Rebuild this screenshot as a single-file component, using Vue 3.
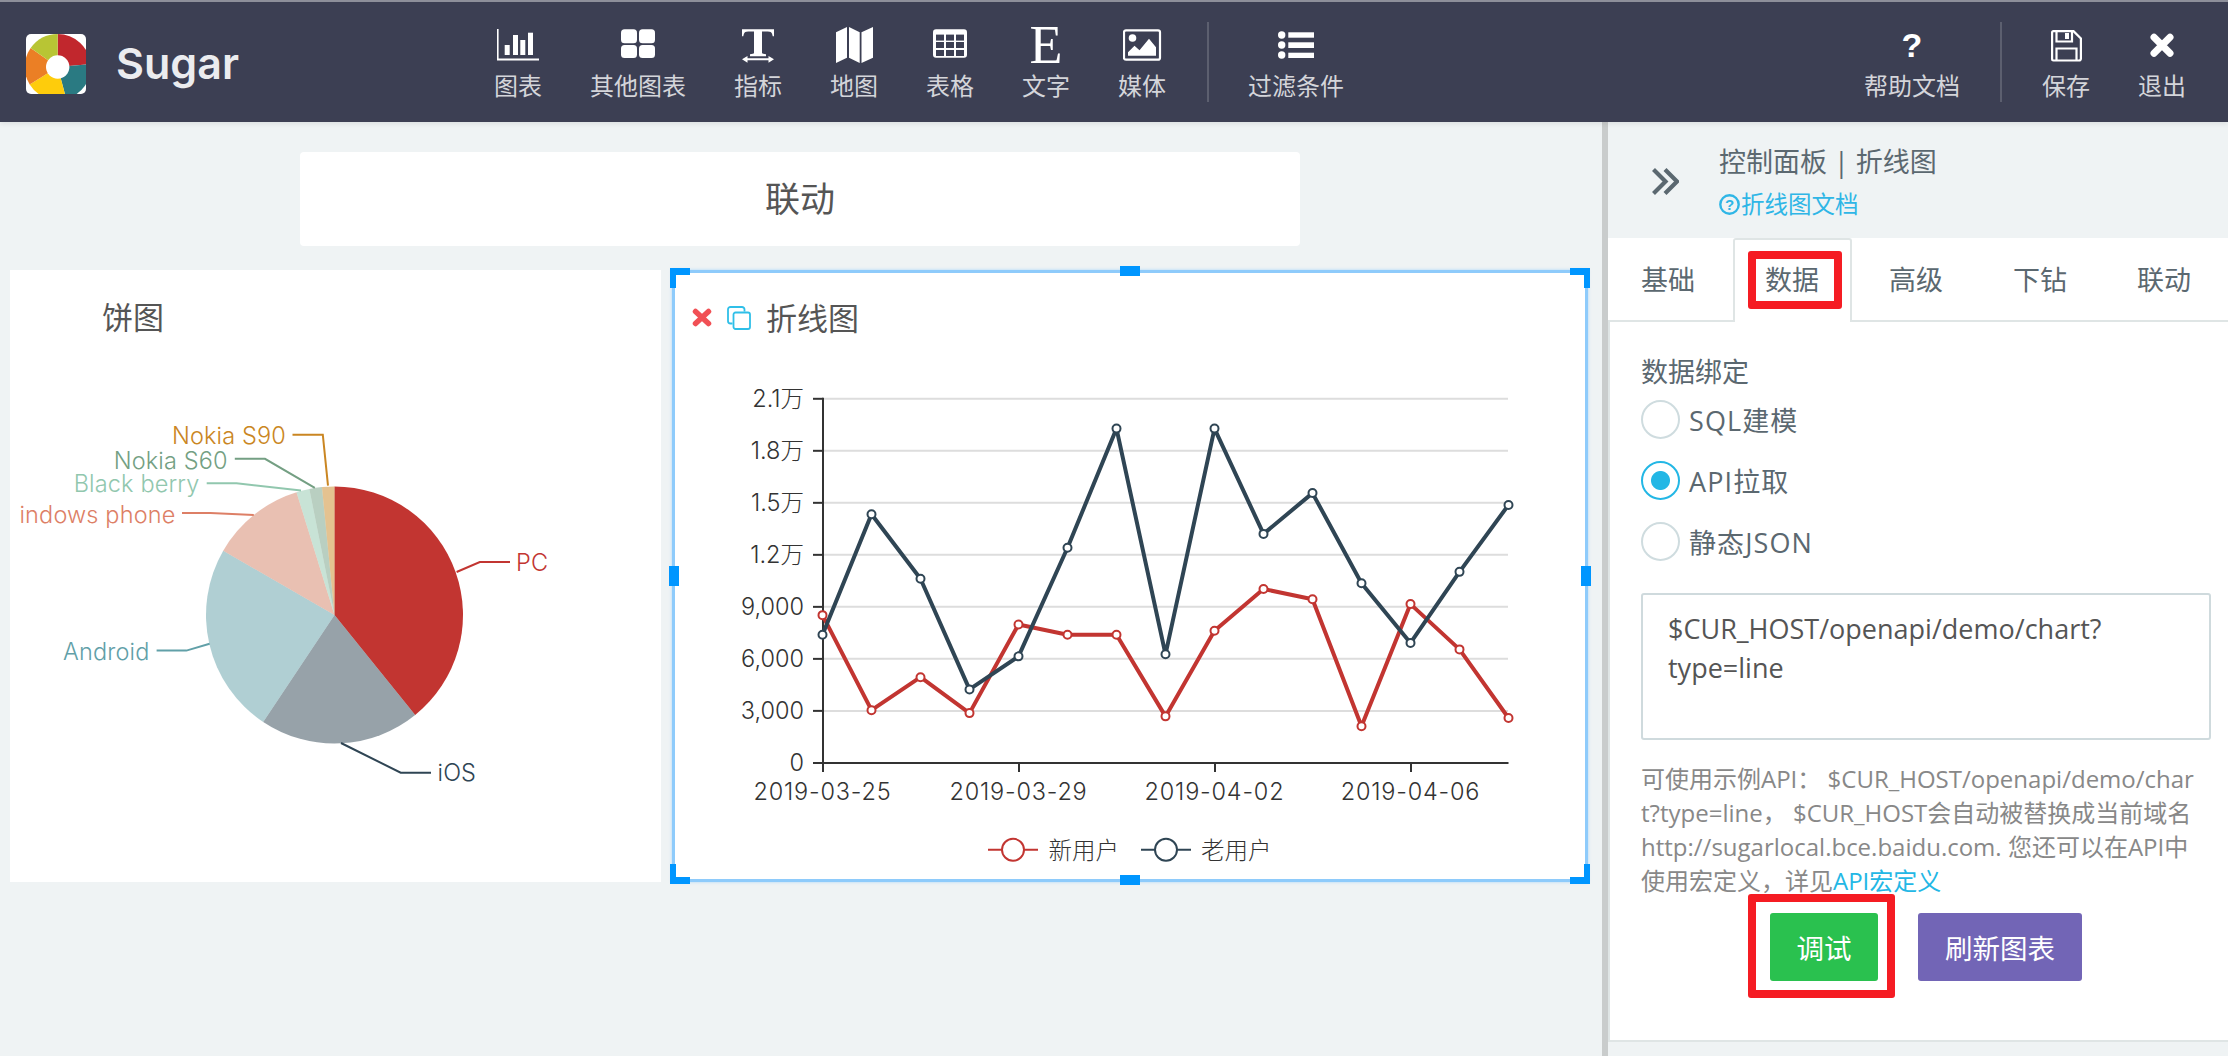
<script setup>
import { computed } from 'vue'

const toolsLeft = [
  { key: 'chart', label: '图表' },
  { key: 'grid', label: '其他图表' },
  { key: 'metric', label: '指标' },
  { key: 'map', label: '地图' },
  { key: 'table', label: '表格' },
  { key: 'text', label: '文字' },
  { key: 'media', label: '媒体' },
]
const tabs = ['基础', '数据', '高级', '下钻', '联动']

// angles are degrees clockwise from 12 o'clock
function sector(cx, cy, r, a0, a1) {
  const p = (a) => {
    const t = (a * Math.PI) / 180
    return `${(cx + r * Math.sin(t)).toFixed(2)} ${(cy - r * Math.cos(t)).toFixed(2)}`
  }
  return `M${cx} ${cy}L${p(a0)}A${r} ${r} 0 ${a1 - a0 > 180 ? 1 : 0} 1 ${p(a1)}Z`
}

const logoParts = [
  [0, 85, '#c1272d'],
  [85, 165, '#2a7a82'],
  [165, 238, '#fecc0c'],
  [238, 305, '#eb7f25'],
  [305, 360, '#b8c534'],
].map(([a, b, fill]) => ({ d: sector(31.7, 33, 33, a, b), fill }))

const pieParts = [
  [0, 141.1, '#c23531', 1],
  [141.1, 213.7, '#2f4554', 0.5],
  [213.7, 300, '#61a0a8', 0.5],
  [300, 342.8, '#d48265', 0.5],
  [342.8, 348.7, '#91c7ae', 0.5],
  [348.7, 354.4, '#749f83', 0.5],
  [354.4, 360, '#ca8622', 0.5],
].map(([a, b, fill, opacity]) => ({ d: sector(334.5, 615, 128.5, a, b), fill, opacity }))

const pieLabels = [
  { name: 'PC', color: '#c23531', pts: '456.6,572 479.8,562 510,562', x: 516, y: 562, anchor: 'start' },
  { name: 'iOS', color: '#2f4554', pts: '341,743 400.7,772.7 431,772.7', x: 437.5, y: 772.7, anchor: 'start' },
  { name: 'Android', color: '#61a0a8', pts: '209.6,643.7 186.4,650.6 156.6,650.6', x: 149.5, y: 651.5, anchor: 'end' },
  { name: 'Windows phone', color: '#dd7f66', pts: '253.8,515 210.4,513 182,513', x: 175.5, y: 514, anchor: 'end' },
  { name: 'Black berry', color: '#91c7ae', pts: '301,490.6 236.5,483.3 206.7,483.3', x: 199.5, y: 483.7, anchor: 'end' },
  { name: 'Nokia S60', color: '#749f83', pts: '314.8,487.8 265,458.8 234.8,458.8', x: 227.7, y: 460, anchor: 'end' },
  { name: 'Nokia S90', color: '#ca8622', pts: '328,485.7 322.8,434.7 292.5,434.7', x: 286, y: 435.5, anchor: 'end' },
]

const newUsers = [8523, 3037, 4944, 2872, 7981, 7392, 7392, 2684, 7627, 10029, 9440, 2119, 9158, 6546, 2590]
const oldUsers = [7392, 14337, 10618, 4238, 6145, 12407, 19281, 6264, 19281, 13208, 15562, 10360, 6922, 11018, 14879]

const xAt = (i) => 822.5 + i * 49
const yAt = (v) => 762.9 - (v * 364.1) / 21000

const toSeries = (values, color) => {
  const points = values.map((v, i) => ({ x: xAt(i), y: yAt(v) }))
  return { color, points, line: points.map((p) => `${p.x},${p.y.toFixed(1)}`).join(' ') }
}
const series = computed(() => [toSeries(newUsers, '#c23531'), toSeries(oldUsers, '#2f4554')])

const yTicks = [
  [0, '0'], [3000, '3,000'], [6000, '6,000'], [9000, '9,000'],
  [12000, '1.2万'], [15000, '1.5万'], [18000, '1.8万'], [21000, '2.1万'],
].map(([v, label]) => ({ v, label, y: yAt(v) }))

const xTicks = [
  [823, '2019-03-25'], [1019, '2019-03-29'], [1215, '2019-04-02'], [1411, '2019-04-06'],
].map(([x, label]) => ({ x, label }))
</script>

<template>
  <div class="app">
    <header class="topbar">
      <div class="brand">
        <div class="logo">
          <svg width="60" height="60" viewBox="0 0 60 60">
            <path v-for="p in logoParts" :key="p.fill" :d="p.d" :fill="p.fill" />
            <circle cx="31.7" cy="33" r="11.7" fill="#fff" />
          </svg>
        </div>
        <span class="brand-name">Sugar</span>
      </div>

      <nav class="tools">
        <div v-for="t in toolsLeft" :key="t.key" class="tool">
          <div class="tool-icon">
            <svg v-if="t.key === 'chart'" width="42" height="36" viewBox="0 0 42 36" fill="#fff">
              <path d="M0 2h1.6v29.5H42v2H0z" />
              <rect x="7.7" y="18" width="5" height="10" />
              <rect x="16" y="8" width="5" height="20" />
              <rect x="23.3" y="13" width="5" height="15" />
              <rect x="31" y="5.700" width="5" height="22.300" />
            </svg>
            <svg v-else-if="t.key === 'grid'" width="34" height="36" viewBox="0 0 34 36" fill="#fff">
              <rect x="0" y="2.300" width="16" height="14" rx="3.500" />
              <rect x="18" y="2.300" width="16" height="14" rx="3.500" />
              <rect x="0" y="18" width="16" height="13" rx="3.500" />
              <rect x="18" y="18" width="16" height="13" rx="3.500" />
            </svg>
            <svg v-else-if="t.key === 'metric'" width="32" height="36" viewBox="0 0 32 36" fill="#fff">
              <path d="M0 2.300h32v7h-1.300c-.3-2-.8-3.600-2-4.300-1-.5-4-.6-8.700-.6v21.500c0 .8 2 1 4 1.400v1.900H8v-1.900c2-.4 4-.6 4-1.400V4.400c-4.700 0-7.700.1-8.700.6-1.200.7-1.700 2.300-2 4.300H0z" />
              <path d="M5.500 29 0 32.300l5.500 3.400v-2.400h21v2.400l5.500-3.400-5.500-3.300v2.300h-21z" />
            </svg>
            <svg v-else-if="t.key === 'map'" width="37" height="36" viewBox="0 0 37 36" fill="#fff">
              <path d="M0 5.300 11 0v30.700L0 36zM13 0l10.700 5.300V36L13 30.700zM25.500 5.300 37 0v30.700L25.500 36z" />
            </svg>
            <svg v-else-if="t.key === 'table'" width="34" height="36" viewBox="0 0 34 36">
              <rect x="0" y="2.300" width="34" height="28.400" rx="3" fill="#fff" />
              <g fill="#3c3f53">
                <template v-for="cy in [7.600, 15, 23]" :key="cy">
                  <rect x="3" :y="cy" width="8" height="6" />
                  <rect x="13" :y="cy" width="8" height="6" />
                  <rect x="23" :y="cy" width="8" height="6" />
                </template>
              </g>
            </svg>
            <span v-else-if="t.key === 'text'" class="glyph-e">E</span>
            <svg v-else width="39" height="36" viewBox="0 0 39 36">
              <rect x="1" y="3.300" width="36" height="29.400" rx="2" fill="none" stroke="#fff" stroke-width="2.200" />
              <circle cx="9.500" cy="11" r="3.800" fill="#fff" />
              <path d="M5 28.700v-3.500l6.500-6.500 5 4.500 9.500-11.500 7 8.500v8.500z" fill="#fff" />
            </svg>
          </div>
          <span class="tool-label">{{ t.label }}</span>
        </div>
        <i class="vline first-line"></i>
        <div class="tool">
          <div class="tool-icon">
            <svg width="36" height="36" viewBox="0 0 36 36" fill="#fff">
              <circle cx="3.700" cy="8" r="3.700" />
              <circle cx="3.700" cy="18" r="3.700" />
              <circle cx="3.700" cy="28" r="3.700" />
              <rect x="10.300" y="5.300" width="25.700" height="5.400" />
              <rect x="10.300" y="15.300" width="25.700" height="5.700" />
              <rect x="10.300" y="25.700" width="25.700" height="5.300" />
            </svg>
          </div>
          <span class="tool-label">过滤条件</span>
        </div>
      </nav>

      <div class="tools tools-right">
        <div class="tool">
          <div class="tool-icon"><span class="glyph-q">?</span></div>
          <span class="tool-label">帮助文档</span>
        </div>
        <i class="vline"></i>
        <div class="tool">
          <div class="tool-icon">
            <svg width="31" height="36" viewBox="0 0 31 36" fill="none" stroke="#fff" stroke-width="2.200">
              <path d="M2.500 4.100h20l7.400 7.400v20a2 2 0 0 1-2 2h-25.400a1.400 1.400 0 0 1-1.400-1.400v-26.600a1.400 1.400 0 0 1 1.400-1.400z" />
              <path d="M5.500 4.500v10h15.500v-10M5.500 33v-11.500h20v11.500" />
              <rect x="14" y="6" width="4" height="6" fill="#fff" stroke="none" />
            </svg>
          </div>
          <span class="tool-label">保存</span>
        </div>
        <div class="tool">
          <div class="tool-icon">
            <svg width="24" height="36" viewBox="0 0 24 36" stroke="#fff" stroke-width="7" stroke-linecap="round">
              <path d="M4 10.300l16 16M20 10.300l-16 16" />
            </svg>
          </div>
          <span class="tool-label">退出</span>
        </div>
      </div>
    </header>

    <main class="workspace">
      <section class="canvas">
        <div class="title-card">联动</div>
        <div class="card-row">
          <div class="pie-card">
            <div class="card-head pie-head">饼图</div>
            <svg class="chart" width="651" height="538" viewBox="10 344 651 538">
              <defs>
                <clipPath id="pie-clip"><rect x="20" y="344" width="641" height="538" /></clipPath>
              </defs>
              <path v-for="p in pieParts" :key="p.fill" :d="p.d" :fill="p.fill" :opacity="p.opacity" />
              <g clip-path="url(#pie-clip)">
                <g v-for="l in pieLabels" :key="l.name">
                  <polyline :points="l.pts" fill="none" :stroke="l.color" stroke-width="2" />
                  <text :x="l.x" :y="l.y" :fill="l.color" :text-anchor="l.anchor" dominant-baseline="central" class="pie-text">{{ l.name }}</text>
                </g>
              </g>
            </svg>
          </div>

          <div class="line-card">
            <i class="handle corner tl"></i>
            <i class="handle corner tr"></i>
            <i class="handle corner bl"></i>
            <i class="handle corner br"></i>
            <i class="handle mid top"></i>
            <i class="handle mid bottom"></i>
            <i class="handle side left"></i>
            <i class="handle side right"></i>
            <div class="card-head line-head">
              <svg class="del-icon" width="20" height="19" viewBox="0 0 20 19" stroke="#f15055" stroke-width="5.500" stroke-linecap="round">
                <path d="M3.500 3.500l13 12M16.500 3.500l-13 12" />
              </svg>
              <svg class="copy-icon" width="24" height="24" viewBox="0 0 24 24" fill="none" stroke="#2fbfe8" stroke-width="1.800">
                <path d="M5.500 17.500h-2a2.500 2.500 0 0 1-2.500-2.500v-11.500a2.500 2.500 0 0 1 2.500-2.500h11.500a2.500 2.500 0 0 1 2.500 2.500v2" />
                <rect x="6.500" y="6.500" width="16.500" height="16.500" rx="2" />
              </svg>
              <span>折线图</span>
            </div>
            <svg class="chart" width="911" height="537" viewBox="675 344 911 537">
              <line v-for="t in yTicks.slice(1)" :key="t.v" x1="823" x2="1508" :y1="t.y" :y2="t.y" stroke="#ddd" stroke-width="2" />
              <g stroke="#333" stroke-width="2">
                <line x1="823" x2="823" y1="397.800" y2="763.900" />
                <line x1="813" x2="1508.500" y1="762.900" y2="762.900" />
                <line v-for="t in yTicks.slice(1)" :key="t.v" x1="813" x2="823" :y1="t.y" :y2="t.y" />
                <line v-for="t in xTicks" :key="t.x" :x1="t.x" :x2="t.x" y1="763" y2="772" />
              </g>
              <text v-for="t in yTicks" :key="t.v" x="804" :y="t.y" text-anchor="end" dominant-baseline="central" class="axis-text">{{ t.label }}</text>
              <text v-for="t in xTicks" :key="t.x" :x="t.x - 0.5" y="791" text-anchor="middle" dominant-baseline="central" class="axis-text x-text">{{ t.label }}</text>
              <g v-for="s in series" :key="s.color">
                <polyline :points="s.line" fill="none" :stroke="s.color" stroke-width="4" stroke-linejoin="round" />
                <circle v-for="(p, i) in s.points" :key="i" :cx="p.x" :cy="p.y" r="4" fill="#fff" :stroke="s.color" stroke-width="2" />
              </g>
              <g fill="#fff" stroke-width="2">
                <line x1="988" x2="1038" y1="849.800" y2="849.800" stroke="#c23531" />
                <circle cx="1013" cy="849.800" r="11" stroke="#c23531" />
                <line x1="1141" x2="1191" y1="849.800" y2="849.800" stroke="#2f4554" />
                <circle cx="1166" cy="849.800" r="11" stroke="#2f4554" />
              </g>
              <text x="1048.500" y="850" dominant-baseline="central" class="legend-text">新用户</text>
              <text x="1201" y="850" dominant-baseline="central" class="legend-text">老用户</text>
            </svg>
          </div>
        </div>
      </section>

      <div class="splitter"></div>

      <aside class="panel">
        <div class="panel-head">
          <svg class="collapse" width="27" height="27" viewBox="0 0 27 27" fill="none" stroke="#5b6870" stroke-width="4.200">
            <path d="M1.500 1.500 13.500 13.500 1.500 25.500M13 1.500 25 13.500 13 25.500" />
          </svg>
          <div class="panel-titles">
            <div class="panel-title">控制面板 | 折线图</div>
            <a class="doc-link">
              <svg width="21" height="21" viewBox="0 0 21 21">
                <circle cx="10.500" cy="10.500" r="9.200" fill="none" stroke="#2fb6e6" stroke-width="2.400" />
                <text x="10.500" y="16" text-anchor="middle" class="doc-q">?</text>
              </svg>折线图文档
            </a>
          </div>
        </div>

        <div class="tabs">
          <div v-for="t in tabs" :key="t" class="tab" :class="{ active: t === '数据' }">
            {{ t }}
            <i v-if="t === '数据'" class="mark tab-mark"></i>
          </div>
        </div>

        <div class="panel-body">
          <div class="field-label">数据绑定</div>
          <label class="radio"><i class="dot"></i>SQL建模</label>
          <label class="radio on"><i class="dot"></i>API拉取</label>
          <label class="radio"><i class="dot"></i>静态JSON</label>
          <textarea class="url-box" readonly spellcheck="false">$CUR_HOST/openapi/demo/chart?type=line</textarea>
          <p class="hint">
            可使用示例API： $CUR_HOST/openapi/demo/char<br />
            t?type=line， $CUR_HOST会自动被替换成当前域名<br />
            http://sugarlocal.bce.baidu.com. 您还可以在API中<br />
            使用宏定义，详见<a class="hint-link">API宏定义</a>
          </p>
          <div class="actions">
            <button class="btn btn-debug">调试<i class="mark btn-mark"></i></button>
            <button class="btn btn-refresh">刷新图表</button>
          </div>
        </div>
      </aside>
    </main>
  </div>
</template>

<style scoped>
.app {
  width: 2228px;
  height: 1056px;
  overflow: hidden;
  display: flex;
  flex-direction: column;
  background: #eff3f4;
  font-family: "Open Sans", "Noto Sans CJK SC", sans-serif;
}

/* top bar */
.topbar {
  height: 122px;
  flex: none;
  display: flex;
  background: #3c3f53;
  border-top: 2px solid #8d8f9a;
  box-sizing: border-box;
  box-shadow: 0 2px 5px rgba(0, 0, 0, 0.08);
  position: relative;
  z-index: 2;
}
.brand {
  width: 494px;
  display: flex;
  align-items: center;
  padding: 0 0 0 26px;
  box-sizing: border-box;
  height: 120px;
}
.logo {
  width: 60px;
  height: 60px;
  border-radius: 5px;
  background: #fff;
  overflow: hidden;
  margin-top: 4px;
}
.logo svg {
  display: block;
}
.brand-name {
  margin-left: 30px;
  font: 600 43px Inter, sans-serif;
  color: #ebecef;
  margin-top: 2px;
}
.tools {
  display: flex;
  gap: 48px;
  padding-top: 25px;
}
.tools-right {
  margin-left: auto;
  padding-right: 42px;
}
.tool {
  display: flex;
  flex-direction: column;
  align-items: center;
}
.tool-icon {
  height: 36px;
  display: flex;
  align-items: center;
  justify-content: center;
}
.tool-icon svg {
  display: block;
}
.tool-label {
  margin-top: 11px;
  font-size: 24px;
  line-height: 24px;
  color: #d4d5da;
  white-space: nowrap;
}
.vline {
  width: 2px;
  height: 80px;
  margin: -5px -8px 0;
  background: #5c5f6f;
}
.first-line {
  margin-left: -7px;
  margin-right: -9px;
}
.glyph-e {
  font: 54px/36px "Liberation Serif", serif;
  color: #fff;
}
.glyph-q {
  font: 700 34px/36px "Liberation Sans", sans-serif;
  color: #fff;
}

/* canvas side */
.workspace {
  flex: 1;
  display: flex;
  min-height: 0;
}
.canvas {
  width: 1602px;
  flex: none;
  padding-top: 30px;
  box-sizing: border-box;
}
.title-card {
  width: 1000px;
  height: 94px;
  margin-left: 300px;
  border-radius: 4px;
  background: #fff;
  color: #555;
  font-size: 35px;
  line-height: 94px;
  text-align: center;
}
.card-row {
  display: flex;
  gap: 11px;
  margin: 24px 0 0 10px;
}
.pie-card {
  width: 651px;
  height: 612px;
  background: #fff;
}
.card-head {
  height: 74px;
  box-sizing: border-box;
  display: flex;
  align-items: center;
  font-size: 31px;
  color: #555;
}
.pie-head {
  padding: 17px 0 0 92px;
}
.chart {
  display: block;
}
.pie-text,
.axis-text,
.legend-text {
  font-family: Inter, "Noto Sans CJK SC", sans-serif;
  font-weight: 300;
  font-size: 23.500px;
}
.pie-text {
  letter-spacing: 0.150px;
}
.axis-text,
.legend-text {
  fill: #333;
}
.x-text {
  letter-spacing: 0.800px;
}
.line-card {
  width: 916px;
  height: 612px;
  box-sizing: border-box;
  position: relative;
  background: #fff;
  border: 3px solid #8ecbfb;
  box-shadow: 0 0 3px rgba(142, 203, 251, 0.7);
}
.line-head {
  padding: 18px 0 0 17px;
  height: 71px;
}
.del-icon {
  flex: none;
}
.copy-icon {
  flex: none;
  margin-left: 15px;
}
.line-head span {
  margin: -3px 0 0 15px;
}
.handle {
  position: absolute;
  background: #0096ff;
}
.mid {
  width: 20px;
  height: 10px;
  left: 445px;
}
.mid.top {
  top: -7px;
}
.mid.bottom {
  bottom: -6px;
}
.side {
  width: 10px;
  height: 20px;
  top: 293px;
}
.side.left {
  left: -6px;
}
.side.right {
  right: -6px;
}
.corner {
  width: 20px;
  height: 20px;
  background: none;
}
.corner::before,
.corner::after {
  content: "";
  position: absolute;
  background: #0096ff;
}
.corner::before {
  left: 0;
  right: 0;
  height: 7px;
}
.corner::after {
  top: 0;
  bottom: 0;
  width: 6px;
}
.tl {
  left: -5px;
  top: -5px;
}
.tr {
  right: -5px;
  top: -5px;
}
.tr::after {
  right: 0;
}
.bl {
  left: -5px;
  bottom: -5px;
}
.bl::before {
  bottom: 0;
}
.br {
  right: -5px;
  bottom: -5px;
}
.br::before {
  bottom: 0;
}
.br::after {
  right: 0;
}

/* control panel */
.splitter {
  width: 6px;
  flex: none;
  background: #c9cccc;
}
.panel {
  flex: 1;
  min-width: 0;
}
.panel-head {
  height: 116px;
  display: flex;
  align-items: center;
  padding-left: 44px;
  box-sizing: border-box;
}
.collapse {
  flex: none;
  margin-top: 2px;
}
.panel-titles {
  margin-left: 40px;
}
.panel-title {
  font-size: 27px;
  line-height: 40px;
  color: #5b6870;
  white-space: pre;
}
.doc-link {
  display: flex;
  align-items: center;
  gap: 1px;
  margin-top: 6px;
  margin-bottom: -2px;
  font-size: 23.500px;
  line-height: 32px;
  color: #2fb6e6;
}
.doc-q {
  font: 700 15px "Liberation Sans", sans-serif;
  fill: #2fb6e6;
}
.tabs {
  height: 84px;
  display: flex;
  box-sizing: border-box;
  background: #fff;
  border-bottom: 2px solid #dfe5e5;
  padding-left: 0;
}
.tab {
  position: relative;
  left: -2px;
  width: 124px;
  height: 84px;
  box-sizing: border-box;
  padding-top: 25px;
  text-align: center;
  font-size: 27px;
  line-height: 34px;
  color: #5b6870;
}
.tab.active {
  width: 119px;
  margin: 0 2.500px;
  background: #fff;
  border: 2px solid #dfe5e5;
  border-bottom: 0;
  border-radius: 3px 3px 0 0;
  padding-top: 23px;
}
.mark {
  position: absolute;
  border: 8px solid #f51c23;
  border-radius: 3px;
  box-sizing: border-box;
  pointer-events: none;
}
.tab-mark {
  left: 13px;
  top: 11px;
  width: 94px;
  height: 58px;
}
.panel-body {
  height: 720px;
  box-sizing: border-box;
  background: #fff;
  border-left: 2px solid #dfe5e5;
  border-bottom: 2px solid #dfe5e5;
  padding: 33px 18px 0 31px;
}
.field-label {
  font-size: 27px;
  line-height: 34px;
  color: #5b6870;
}
.radio {
  display: flex;
  align-items: center;
  height: 61px;
  font-size: 27px;
  color: #5b6870;
  letter-spacing: 1.100px;
}
.dot {
  width: 39px;
  height: 39px;
  margin-right: 9px;
  border-radius: 50%;
  box-sizing: border-box;
  border: 2px solid #cfdcdf;
  background: #fff;
  flex: none;
}
.radio.on .dot {
  border-color: #23b7e5;
  background: radial-gradient(circle, #23b7e5 9px, #fff 10px);
}
.url-box {
  display: block;
  width: 570px;
  height: 147px;
  margin: 21px 0 0;
  padding: 14px 25px;
  box-sizing: border-box;
  border: 2px solid #cfdadd;
  border-radius: 3px;
  outline: none;
  resize: none;
  overflow: hidden;
  font-family: inherit;
  font-size: 27px;
  line-height: 39px;
  color: #555;
}
.hint {
  margin: 22px 0 0;
  font-size: 24px;
  line-height: 34px;
  color: #888;
  white-space: nowrap;
}
.hint-link {
  color: #23b7e5;
}
.actions {
  display: flex;
  gap: 40px;
  margin: 15px 0 0 129px;
}
.btn {
  position: relative;
  height: 68px;
  border: 0;
  border-radius: 3px;
  color: #fff;
  font-family: inherit;
  font-size: 27.500px;
  padding: 0;
}
.btn-debug {
  width: 108px;
  background: #2ac14f;
}
.btn-refresh {
  width: 164px;
  background: #7265b6;
}
.btn-mark {
  left: -22px;
  right: -17px;
  top: -19px;
  bottom: -17px;
}
</style>

<style>
body {
  margin: 0;
  overflow: hidden;
}
</style>
